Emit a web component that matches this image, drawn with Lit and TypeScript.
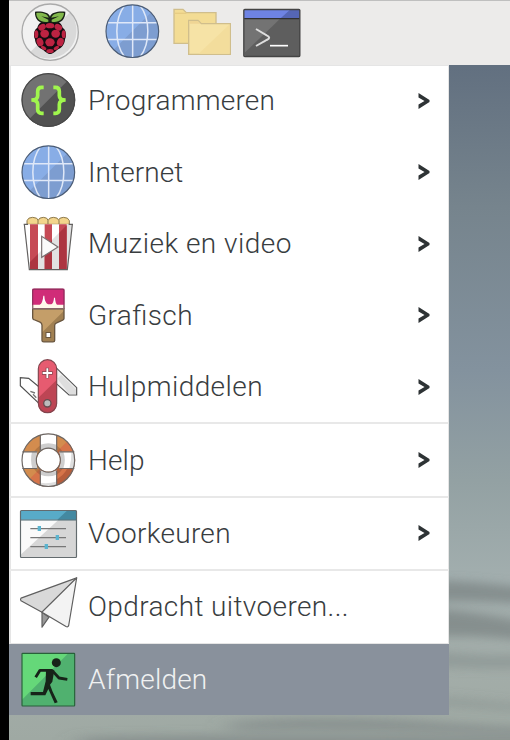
import { LitElement, html, css, svg, type TemplateResult } from "lit";
import { customElement, property } from "lit/decorators.js";
import { styleMap } from "lit/directives/style-map.js";

const globe = svg`
  <circle cx="145" cy="101" r="79" fill="#88ade6"/>
  <path d="M201 45A79 79 0 0 1 89 157Z" fill="#7d9dd0"/>
  <g fill="none" stroke="#dfe8f8" stroke-width="4.5">
    <path d="M146 22V180M68 76H222M68 126H222M121 25C91 65 91 137 121 177M169 25C199 65 199 137 169 177"/>
  </g>
  <circle cx="145" cy="101" r="79" fill="none" stroke="#4b5c75" stroke-width="3.5"/>`;

const icons: Record<string, { box: string; art: TemplateResult }> = {
  raspberry: {
    box: "60 9 171 171",
    art: svg`
      <circle cx="150.500" cy="96.500" r="84.500" fill="#f1f1f1"/>
      <path d="M210 37A84.500 84.500 0 0 1 91 156Z" fill="#d9d9d9"/>
      <circle cx="150.500" cy="96.500" r="84.500" fill="none" stroke="#aaa" stroke-width="4"/>
      <path d="M150 62C134 58 116 67 112 83C102 89 99 106 105 118C106 134 118 145 129 149Q141 161 150 162Q160 161 172 149C184 145 194 134 195 118C201 106 198 89 188 83C184 67 166 58 150 62Z" fill="#130c10"/>
      <path d="M148 68C123 74 103 61 105 35C124 33 146 36 150 50C154 36 177 33 196 35C197 61 178 74 152 68Z" fill="#172015"/>
      <path d="M145 65C124 69 108 57 109 39C126 37 143 41 146 53L124 49L145 59ZM155 65C176 69 191 57 192 39C175 37 158 41 154 53L177 49L155 59Z" fill="#82b94c"/>
      <g fill="#bd2342">
        <ellipse cx="150" cy="77" rx="13" ry="8"/>
        <ellipse cx="126" cy="82" rx="12" ry="9" transform="rotate(-30 126 82)"/>
        <ellipse cx="175" cy="82" rx="12" ry="9" transform="rotate(30 175 82)"/>
        <ellipse cx="134" cy="101" rx="13" ry="12"/>
        <ellipse cx="167" cy="101" rx="13" ry="12"/>
        <ellipse cx="109" cy="103" rx="6" ry="12"/>
        <ellipse cx="191" cy="103" rx="6" ry="12"/>
        <ellipse cx="150" cy="127" rx="14" ry="12"/>
        <ellipse cx="120" cy="126" rx="10" ry="13" transform="rotate(-20 120 126)"/>
        <ellipse cx="181" cy="126" rx="10" ry="13" transform="rotate(20 181 126)"/>
        <ellipse cx="131" cy="144" rx="9" ry="5" transform="rotate(30 131 144)"/>
        <ellipse cx="169" cy="144" rx="9" ry="5" transform="rotate(-30 169 144)"/>
        <ellipse cx="150" cy="153" rx="11" ry="6"/>
      </g>`,
  },
  globe: { box: "60 16.5 171 171", art: globe },
  folders: {
    box: "27 10 171 171",
    art: svg`
      <g stroke="#d0be8c" stroke-width="4">
        <path d="M27 29H54L64 39H153V131H27Z" fill="#f3dc94"/>
        <path d="M29 41H64" stroke="#e7cc83"/>
        <path d="M71 62H99L109 72H196V164H71Z" fill="#f6e3a6"/>
      </g>
      <path d="M73 64H98L106 72H73Z" fill="#efd594"/>
      <path d="M194 74V162H101Z" fill="#f3dd9c"/>`,
  },
  terminal: {
    box: "234 9 171 171",
    art: svg`
      <rect x="236" y="28" width="169" height="142" rx="3" fill="#737373"/>
      <path d="M405 28V170H251Q239 170 239 158L375 28Z" fill="#5e5e5e"/>
      <path d="M237 29H404V55H237Z" fill="#6e83e3"/>
      <path d="M375 29H404V55H347Z" fill="#5566b5"/>
      <path d="M237 56H404" stroke="#303030" stroke-width="4"/>
      <rect x="236.500" y="28.500" width="168" height="141" rx="3" fill="none" stroke="#444" stroke-width="4"/>
      <path d="M273 87L305 106Q320 113 305 120L273 138" fill="none" stroke="#dedede" stroke-width="6"/>
      <path d="M315 137H369" stroke="#fff" stroke-width="5"/>`,
  },
  braces: {
    box: "60 24 171 171",
    art: svg`
      <circle cx="145" cy="108" r="80" fill="#727272"/>
      <path d="M202 51A80 80 0 0 1 88 165Z" fill="#515151"/>
      <circle cx="145" cy="108" r="79" fill="none" stroke="#484848" stroke-width="4"/>
      <path d="M131 70H125Q113 70 113 82V95Q113 108 94 108Q113 108 113 121V136Q113 148 125 148H131M160 70H166Q178 70 178 82V95Q178 108 197 108Q178 108 178 121V136Q178 148 166 148H160" fill="none" stroke="#a0f64d" stroke-width="11"/>`,
  },
  popcorn: {
    box: "60 21 171 171",
    art: svg`
      <g fill="#f3d58c" stroke="#8c794e" stroke-width="3">
        <path d="M81 49V38Q84 28 98 28Q113 28 116 39V49Z"/>
        <path d="M174 49V39Q177 28 190 28Q205 28 208 38V49Z"/>
        <path d="M114 49V38Q117 28 130 28Q142 28 145 38V49Z"/>
        <path d="M144 49V38Q147 28 160 28Q174 28 177 38V49Z"/>
      </g>
      <path d="M73 49H217L202 185H87Z" fill="#fff"/>
      <path d="M217 49L202 185H87L88 164L203 49Z" fill="#e2e2e2"/>
      <path d="M90 49H114V185H90ZM134 49H156V185H134ZM177 49H200V185H177Z" fill="#c64a55"/>
      <path d="M90 162L114 138V185H90ZM134 118L156 96V185H134ZM177 75L200 52V185H177Z" fill="#ac3541"/>
      <path d="M73 49L88 185H202L217 49M71 49H84M206 49H219" fill="none" stroke="#62605f" stroke-width="3.500"/>
      <path d="M125 85V148L174 117Z" fill="#fafafa" stroke="#797070" stroke-width="3.500"/>`,
  },
  brush: {
    box: "60 19.5 171 171",
    art: svg`
      <path d="M98 85H192V114Q192 117 188 119L170 127Q164 129 164 135V180Q164 184 159 184H131Q126 184 126 180V134Q126 128 120 125L101 117Q98 116 98 112Z" fill="#c49e69"/>
      <path d="M192 91V116L170 127Q164 129 164 135V184H128L126 156Z" fill="#a18052"/>
      <path d="M98 85H192V114Q192 117 188 119L170 127Q164 129 164 135V180Q164 184 159 184H131Q126 184 126 180V134Q126 128 120 125L101 117Q98 116 98 112Z" fill="none" stroke="#695640" stroke-width="4"/>
      <path d="M98 64H192V84H98Z" fill="#fff8e9"/>
      <path d="M97 25H193V73H171Q166 69 165 52H162Q161 70 154 71H144Q134 68 133 46H130Q128 69 119 73H97Z" fill="#d02c78"/>
      <path d="M98 84V29Q98 26 102 26H188Q192 26 192 29V84Z" fill="none" stroke="#8b2c59" stroke-width="3.500"/>
      <path d="M98 74V85H192V74" fill="none" stroke="#878071" stroke-width="3"/>
      <rect x="138" y="156" width="14" height="15" fill="#fff" stroke="#695640" stroke-width="3"/>`,
  },
  knife: {
    box: "60 18 171 171",
    art: svg`
      <path d="M120 157L61 101V77L86 79L122 109Z" fill="#fff" stroke="#4f4f4f" stroke-width="3.500"/>
      <path d="M168 47L230 107V129H207L168 94Z" fill="#f1f1f1" stroke="#555" stroke-width="3.500"/>
      <path d="M172 80L184 68L228 112V127H208Z" fill="#dedede"/>
      <path d="M91 118L105 123M99 127L109 137" stroke="#777" stroke-width="4"/>
      <rect x="115" y="23" width="55" height="159" rx="27.500" fill="#e65b70"/>
      <path d="M170 84V155Q169 182 142 182Q115 182 115 155V137Z" fill="#bd4554"/>
      <rect x="115" y="23" width="55" height="159" rx="27.500" fill="none" stroke="#82454e" stroke-width="3.500"/>
      <path d="M142 47V79M126 63H158" stroke="#82454e" stroke-width="10"/>
      <path d="M142 49V78M128 63H156" stroke="#fff" stroke-width="5.500"/>
      <circle cx="142" cy="154" r="11" fill="#bcbcbc" stroke="#684d50" stroke-width="4"/>`,
  },
  lifebuoy: {
    box: "60 22.5 171 171",
    art: svg`
      <circle cx="145" cy="107" r="57" fill="none" stroke="#d38c4e" stroke-width="44"/>
      <path d="M202 50A80 80 0 0 1 88 164L120 132A35 35 0 0 0 170 82Z" fill="#d67449"/>
      <path d="M223 107A79 79 0 0 1 139 186L139 172A73 73 0 0 0 210 102Z" fill="#b75d3b"/>
      <circle cx="145" cy="107" r="43" fill="none" stroke="#000" stroke-opacity=".15" stroke-width="14"/>
      <path d="M121 30Q145 25 170 30V77Q145 67 121 78ZM66 82H112Q104 107 112 132H67Q63 107 66 82ZM178 82H223Q227 107 222 132H178Q187 107 178 82ZM121 138Q145 148 170 138V184Q145 190 121 184Z" fill="#fff"/>
      <path d="M121 61Q145 51 170 61V77Q145 67 121 78ZM96 82H112Q104 107 112 132H97Q90 107 96 82ZM178 82H190Q199 107 190 132H178Q187 107 178 82ZM121 138Q145 148 170 138V151Q145 160 121 151Z" fill="#cecece"/>
      <path d="M214 82H223Q227 107 222 132H208Q215 107 214 82ZM121 175Q145 179 170 171V184Q145 190 121 184Z" fill="#dedede"/>
      <g fill="none" stroke="#6c6663" stroke-width="3.500">
        <circle cx="145" cy="107" r="79"/><circle cx="145" cy="107" r="36"/>
        <path d="M121 31V78M170 31V78M67 82H112M178 82H223M67 132H112M178 132H223M121 138V184M170 138V184"/>
      </g>`,
  },
  sliders: {
    box: "60 21 171 171",
    art: svg`
      <rect x="61" y="38" width="169" height="141" rx="3" fill="#fafafa"/>
      <path d="M205 38H230V179H61V171Z" fill="#d6d6d6"/>
      <path d="M62 38H229V65H62Z" fill="#58abc8"/>
      <path d="M201 38H229V65H172Z" fill="#4389a1"/>
      <path d="M62 66H229" stroke="#4c666f" stroke-width="3"/>
      <rect x="61.500" y="37.500" width="168" height="141" rx="3" fill="none" stroke="#636b6e" stroke-width="3.500"/>
      <path d="M91 92H198M91 119H198M91 146H198" stroke="#777" stroke-width="4"/>
      <path d="M113 84H123V99H113ZM167 111H177V126H167ZM134 138H144V153H134Z" fill="#5bb4cf"/>`,
  },
  plane: {
    box: "60 25.5 171 171",
    art: svg`
      <g stroke="#5f5f5f" stroke-width="3.500" stroke-linejoin="round">
        <path d="M126 128V173L147 143Z" fill="#999"/>
        <path d="M230 25L63 86Q60 89 63 94L126 128Z" fill="#d9d9d9"/>
        <path d="M230 25L206 168Q204 174 198 171L126 128Z" fill="#f3f3f3"/>
      </g>`,
  },
  exit: {
    box: "60 33 171 171",
    art: svg`
      <rect x="66" y="40" width="158" height="158" rx="2" fill="#65d879"/>
      <path d="M205 40H224V198H66V179Z" fill="#50b16f"/>
      <rect x="66" y="40" width="158" height="158" rx="2" fill="none" stroke="#28613a" stroke-width="3.500"/>
      <circle cx="169" cy="68" r="13.500" fill="#172319"/>
      <path d="M107 112L120 91H156L177 114L202 118" fill="none" stroke="#172319" stroke-width="8.500" stroke-linejoin="round"/>
      <path d="M138 91H163L157 125L150 134L158 155L173 187L164 190L145 147L136 166H92V156H129L137 124Z" fill="#172319"/>`,
  },
};

@customElement("pixel-icon")
export class PixelIcon extends LitElement {
  static styles = css`
    :host { display: block; width: 57px; height: 57px; flex: none; }
    .art { display: block; width: 57px; height: 57px; overflow: visible; }
  `;
  @property() name = "globe";
  render() {
    const icon = icons[this.name];
    return html`<svg class="art" viewBox=${icon.box}>${icon.art}</svg>`;
  }
}

interface Entry {
  icon: string;
  label: string;
  /** Extra letter spacing in pixels. */
  tracking: number;
  leaf?: boolean;
  divided?: boolean;
  active?: boolean;
}

const entries: Entry[] = [
  { icon: "braces", label: "Programmeren", tracking: 0.19 },
  { icon: "globe", label: "Internet", tracking: 0.1 },
  { icon: "popcorn", label: "Muziek en video", tracking: 0.48 },
  { icon: "brush", label: "Grafisch", tracking: 0.4 },
  { icon: "knife", label: "Hulpmiddelen", tracking: 0.42 },
  { icon: "lifebuoy", label: "Help", tracking: 0.1, divided: true },
  { icon: "sliders", label: "Voorkeuren", tracking: 0.3, divided: true },
  { icon: "plane", label: "Opdracht uitvoeren...", tracking: 0.38, leaf: true, divided: true },
  { icon: "exit", label: "Afmelden", tracking: 0.2, leaf: true, active: true },
];

@customElement("app-root")
export class AppRoot extends LitElement {
  static styles = css`
    :host {
      display: grid;
      grid-template-columns: 510px;
      grid-template-rows: 740px;
      width: 510px;
      height: 740px;
      overflow: hidden;
      background: #000;
      font-family: Roboto, "Liberation Sans", sans-serif;
    }
    .sky { grid-area: 1 / 1; width: 501px; height: 740px; margin-left: 9px; }
    .desktop { grid-area: 1 / 1; margin-left: 9px; z-index: 1; }
    .panel {
      display: flex;
      box-sizing: border-box;
      height: 65px;
      padding: 2px 0 0 11px;
      border-top: 1px solid #bfbfbf;
      background: #ecebea;
    }
    .launchers { display: flex; margin-left: 27px; gap: 12.5px; }
    .menu {
      display: flex;
      flex-direction: column;
      box-sizing: border-box;
      width: 440px;
      height: 650px;
      background: linear-gradient(#fff, #fff) 1.5px 1px / 437px 577px no-repeat #e5e5e5;
    }
    .row {
      display: flex;
      flex: none;
      align-items: center;
      box-sizing: border-box;
      height: 71.5px;
      padding: 0 19px 0 11px;
      color: #393d3f;
    }
    .divider { flex: none; height: 2px; margin-top: -0.2px; background: #e8e8e8; }
    .active { background: #89919c; color: #f0f1f2; margin-top: auto; height: 71px; }
    .label {
      flex: 1;
      margin: 1px 0 0 11px;
      font-size: 28px;
      font-weight: 300;
      font-feature-settings: "liga" 1;
      line-height: 34px;
      white-space: nowrap;
    }
    .arrow { width: 12px; height: 18px; }
  `;

  render() {
    return html`
      <svg class="sky" viewBox="9 0 501 740" preserveAspectRatio="none">
        <defs>
          <linearGradient id="air" x1="0" y1="0" x2="0" y2="1">
            <stop offset=".09" stop-color="#627080"/>
            <stop offset=".28" stop-color="#76848d"/>
            <stop offset=".5" stop-color="#83929e"/>
            <stop offset=".65" stop-color="#93a1a3"/>
            <stop offset=".78" stop-color="#a2aeae"/>
            <stop offset=".9" stop-color="#a3ada9"/>
            <stop offset="1" stop-color="#9fa9a3"/>
          </linearGradient>
          <filter id="soft" x="-30%" y="-100%" width="160%" height="300%">
            <feGaussianBlur stdDeviation="12 5"/>
          </filter>
        </defs>
        <rect x="9" width="501" height="740" fill="url(#air)"/>
        <g filter="url(#soft)" fill="#737a7b">
          <path d="M400 580Q460 578 550 591V606Q480 599 400 602Z" opacity=".6"/>
          <path d="M400 608Q460 606 550 628V644Q480 632 400 638Z" opacity=".6"/>
          <path d="M400 646Q490 660 550 653V668Q480 672 400 664Z" opacity=".35"/>
          <path d="M400 692Q480 698 550 707V714Q470 709 400 704Z" opacity=".25"/>
          <path d="M230 722Q320 714 420 721T550 728V736Q400 729 230 730Z" opacity=".5"/>
          <path d="M80 737Q280 732 550 738V755H80Z" opacity=".5"/>
        </g>
      </svg>
      <div class="desktop">
        <div class="panel">
          <pixel-icon name="raspberry"></pixel-icon>
          <div class="launchers">
            <pixel-icon name="globe"></pixel-icon>
            <pixel-icon name="folders"></pixel-icon>
            <pixel-icon name="terminal"></pixel-icon>
          </div>
        </div>
        <div class="menu">
          ${entries.map(
            (e) => html`
              ${e.divided ? html`<div class="divider"></div>` : null}
              <div class="row ${e.active ? "active" : ""}">
                <pixel-icon name=${e.icon}></pixel-icon>
                <span class="label" style=${styleMap({ letterSpacing: `${e.tracking}px` })}>${e.label}</span>
                ${e.leaf
                  ? null
                  : html`<svg class="arrow" viewBox="0 0 12 18">
                      <path d="M0.500 1L11.500 8V10L0.500 17V12.500L6.500 9L0.500 5.500Z" fill="#2e3335"/>
                    </svg>`}
              </div>
            `
          )}
        </div>
      </div>
    `;
  }
}
